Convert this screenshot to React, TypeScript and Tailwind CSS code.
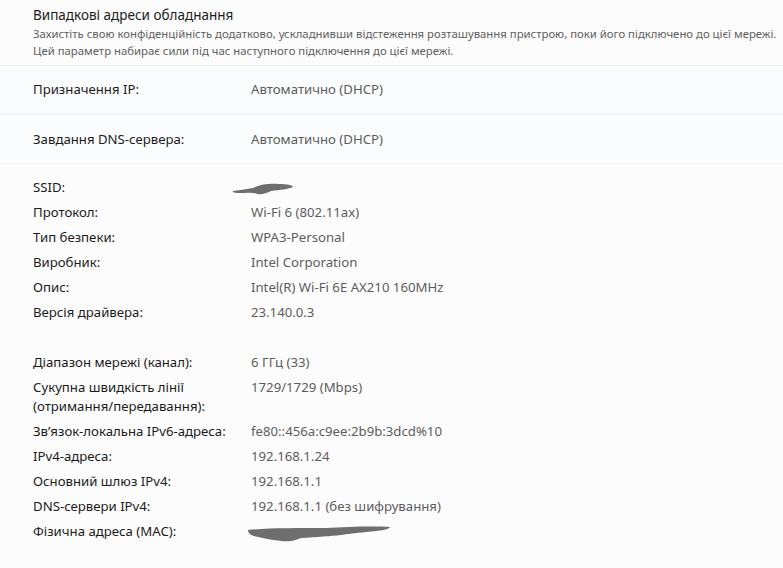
import React from "react";

const Scribble = ({ w, h, d }: { w: number; h: number; d: string }) => (
  <svg width={w} height={h} viewBox={`0 0 ${w} ${h}`} className="block">
    <path d={d} fill="#6e6e6e" />
  </svg>
);

const Row = ({ label, value }: { label: React.ReactNode; value: React.ReactNode }) => (
  <div className="flex h-[25px] items-start">
    <div className="w-[218px] shrink-0 text-[#1b1b1b] leading-[19px]">{label}</div>
    <div className="text-[#5c5c5c] leading-[19px]">{value}</div>
  </div>
);

export default function App() {
  return (
    <div
      className="w-[783px] h-[568px] overflow-hidden bg-[#fcfcfc] text-[13.2px]"
      style={{ fontFamily: '"Noto Sans", "Open Sans", sans-serif' }}
    >
      <div className="px-[33px] pt-[6px] h-[65px] bg-[#fcfcfc]">
        <div className="text-[13.5px] leading-[19px] text-[#1b1b1b]">Випадкові адреси обладнання</div>
        <div className="text-[11.35px] leading-[17px] text-[#606060] whitespace-nowrap">
          Захистіть свою конфіденційність додатково, ускладнивши відстеження розташування пристрою, поки його підключено до цієї мережі.
          <br />
          Цей параметр набирає сили під час наступного підключення до цієї мережі.
        </div>
      </div>
      <div className="h-px bg-[#eceef0]" />
      <div className="h-[48px] bg-[#fbfcfd] px-[33px] flex items-center border-b border-[#eef0f2]">
        <div className="w-[218px] text-[#1b1b1b]">Призначення IP:</div>
        <div className="text-[#5c5c5c]">Автоматично (DHCP)</div>
      </div>
      <div className="h-px bg-[#f4f6f8]" />
      <div className="h-[49px] bg-[#fbfcfd] px-[33px] pt-[2px] flex items-center border-b border-[#eef0f2]">
        <div className="w-[218px] text-[#1b1b1b]">Завдання DNS-сервера:</div>
        <div className="text-[#5c5c5c]">Автоматично (DHCP)</div>
      </div>
      <div className="bg-[#fcfcfc] px-[33px] pt-[14px]">
        <Row
          label="SSID:"
          value={
            <div className="pt-[4px] -ml-[20px]">
              <Scribble
                w={64}
                h={14}
                d="M2 9 C10 8 16 7 22 6 C28 3 36 1 48 2 C56 2 62 3 62 5 C58 7 48 8 40 9 C36 11 30 13 26 12 C22 10 14 11 6 11 C3 11 1 10 2 9 Z"
              />
            </div>
          }
        />
        <Row label="Протокол:" value="Wi-Fi 6 (802.11ax)" />
        <Row label="Тип безпеки:" value="WPA3-Personal" />
        <Row label="Виробник:" value="Intel Corporation" />
        <Row label="Опис:" value="Intel(R) Wi-Fi 6E AX210 160MHz" />
        <Row label="Версія драйвера:" value="23.140.0.3" />
        <div className="h-[25px]" />
        <Row label="Діапазон мережі (канал):" value="6 ГГц (33)" />
        <div className="flex h-[44px] items-start">
          <div className="w-[218px] shrink-0 text-[#1b1b1b] leading-[19px]">
            Сукупна швидкість лінії
            <br />
            (отримання/передавання):
          </div>
          <div className="text-[#5c5c5c] leading-[19px]">1729/1729 (Mbps)</div>
        </div>
        <Row label="Зв’язок-локальна IPv6-адреса:" value="fe80::456a:c9ee:2b9b:3dcd%10" />
        <Row label="IPv4-адреса:" value="192.168.1.24" />
        <Row label="Основний шлюз IPv4:" value="192.168.1.1" />
        <Row label="DNS-сервери IPv4:" value="192.168.1.1 (без шифрування)" />
        <Row
          label="Фізична адреса (MAC):"
          value={
            <div className="pt-[3px] -ml-[5px]">
              <Scribble
                w={146}
                h={18}
                d="M2 5 C20 3 50 3 80 3 C100 2 125 1 144 2 C144 4 135 6 120 7 C110 8 100 9 95 10 C85 11 70 12 55 13 C50 15 45 17 35 16 C28 15 20 14 12 12 C6 11 2 9 2 5 Z"
              />
            </div>
          }
        />
      </div>
    </div>
  );
}
